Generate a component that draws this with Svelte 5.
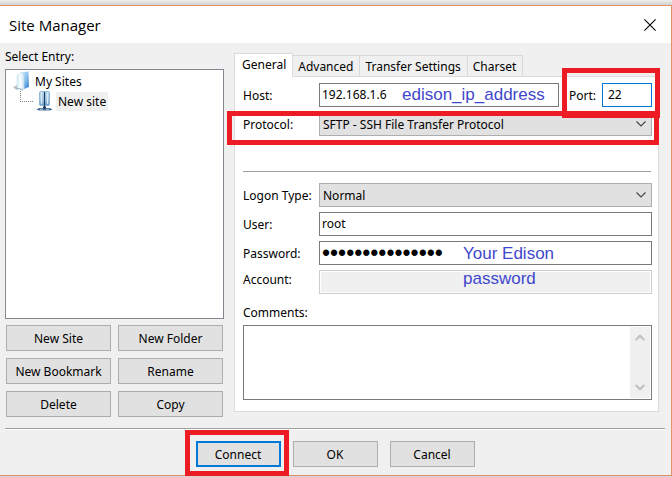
<script lang="ts">
  type Field = { host: string; port: string; user: string; password: string; account: string; comments: string };

  const tabs = ["General", "Advanced", "Transfer Settings", "Charset"];
  const siteActions = ["New Site", "New Folder", "New Bookmark", "Rename", "Delete", "Copy"];

  let activeTab = $state("General");
  let protocol = $state("SFTP - SSH File Transfer Protocol");
  let logonType = $state("Normal");
  let site = $state<Field>({
    host: "192.168.1.6",
    port: "22",
    user: "root",
    password: "edisonpassword1",
    account: "",
    comments: "",
  });
</script>

{#snippet chevron()}
  <svg class="chevron" viewBox="0 0 10 6" aria-hidden="true">
    <path d="M0.5 0.5 5 5 9.5 0.5" fill="none" stroke="#444" stroke-width="1.1" />
  </svg>
{/snippet}

<div class="dialog" role="dialog" aria-labelledby="title">
  <header>
    <h1 id="title">Site Manager</h1>
    <button class="close" type="button" aria-label="Close">
      <svg viewBox="0 0 12 12" aria-hidden="true">
        <path d="M0.4 0.4 11.6 11.6M11.6 0.4 0.4 11.6" stroke="#000" stroke-width="1.1" />
      </svg>
    </button>
  </header>

  <main>
    <section class="sites">
      <span id="entries">Select Entry:</span>
      <ul class="tree" role="tree" aria-labelledby="entries">
        <li role="treeitem" aria-selected="false">
          <div class="node">
            <svg class="folder" viewBox="0 0 19 20" aria-hidden="true">
              <defs>
                <linearGradient id="flap" x1="0" x2="1" y1="0" y2="1">
                  <stop offset="0" stop-color="#d9effb" />
                  <stop offset="0.5" stop-color="#8fc3ee" />
                  <stop offset="1" stop-color="#2f7fd0" />
                </linearGradient>
                <linearGradient id="front" x1="0" x2="1">
                  <stop offset="0" stop-color="#d3e9f6" />
                  <stop offset="0.5" stop-color="#fbfeff" />
                  <stop offset="1" stop-color="#c6e1f4" />
                </linearGradient>
              </defs>
              <path d="M0 16 4 14 5 19 2 18z" fill="#a9b4bc" opacity="0.8" />
              <path d="M7 1.5 15.5 0.5 16 16 11 18z" fill="url(#flap)" />
              <path d="M4 4 9 2 11 4 11 18.5 4 17z" fill="url(#front)" stroke="#c0dcec" stroke-width="0.5" />
              <path d="M3 17 10 18.8" stroke="#9db4c4" stroke-width="1" />
            </svg>
            <span>My Sites</span>
          </div>
          <ul role="group">
            <li role="treeitem" aria-selected="true">
              <div class="node child">
                <svg class="server" viewBox="0 0 17 20" aria-hidden="true">
                  <defs>
                    <linearGradient id="rack" x1="0" x2="0" y1="0" y2="1">
                      <stop offset="0" stop-color="#bdd8ec" />
                      <stop offset="0.6" stop-color="#a9cce6" />
                      <stop offset="1" stop-color="#6f9fc8" />
                    </linearGradient>
                  </defs>
                  <path d="M0.5 18.5 3 17H14L16.5 18.5 14 19.5H3z" fill="#4a6f92" />
                  <path d="M4 18.3H7M10 18.3H13" stroke="#a9cbe0" />
                  <rect x="3.5" y="0.5" width="10" height="14" rx="1" fill="url(#rack)" stroke="#93b7d2" />
                  <path d="M5.5 1V13M11.5 1V13" stroke="#d6eaf6" />
                  <path d="M8.5 1V18" stroke="#173f66" stroke-width="1.2" />
                  <path d="M7 16.5H10" stroke="#173f66" stroke-width="2" />
                </svg>
                <span class="selected">New site</span>
              </div>
            </li>
          </ul>
        </li>
      </ul>
      <div class="site-actions">
        {#each siteActions as action}
          <button class="push" type="button">{action}</button>
        {/each}
      </div>
    </section>

    <section class="settings">
      <div class="tabs" role="tablist">
        {#each tabs as tab}
          <button
            type="button"
            role="tab"
            class={["tab", activeTab === tab && "active"]}
            aria-selected={activeTab === tab}
            onclick={() => (activeTab = tab)}>{tab}</button
          >
        {/each}
      </div>

      <div class="panel" role="tabpanel">
        <div class="form">
          <label for="host">Host:</label>
          <div class="host-row">
            <div class="noted">
              <input id="host" bind:value={site.host} />
              <span class="note note-host">edison_ip_address</span>
            </div>
            <div class="port">
              <label for="port">Port:</label>
              <input id="port" class="focused" bind:value={site.port} />
              <span class="mark mark-port"></span>
            </div>
          </div>

          <label for="protocol">Protocol:</label>
          <div class="select">
            <select id="protocol" bind:value={protocol}>
              <option>SFTP - SSH File Transfer Protocol</option>
              <option>FTP - File Transfer Protocol</option>
            </select>
            {@render chevron()}
            <span class="mark mark-protocol"></span>
          </div>
        </div>

        <hr />

        <div class="form">
          <label for="logon">Logon Type:</label>
          <div class="select">
            <select id="logon" bind:value={logonType}>
              <option>Normal</option>
              <option>Anonymous</option>
            </select>
            {@render chevron()}
          </div>

          <label for="user">User:</label>
          <input id="user" bind:value={site.user} />

          <label for="password">Password:</label>
          <div class="noted">
            <input id="password" type="password" bind:value={site.password} />
            <span class="note note-password">Your Edison<br />password</span>
          </div>

          <label class="raised" for="account">Account:</label>
          <input id="account" disabled bind:value={site.account} />
        </div>

        <label class="comments-label" for="comments">Comments:</label>
        <div class="comments">
          <textarea id="comments" bind:value={site.comments}></textarea>
          <div class="scrollbar" aria-hidden="true">
            <svg viewBox="0 0 10 7"><path d="M0.7 6 5 1.7 9.3 6" fill="none" stroke="#bfbfbf" stroke-width="2" /></svg>
            <svg viewBox="0 0 10 7"><path d="M0.7 1 5 5.3 9.3 1" fill="none" stroke="#bfbfbf" stroke-width="2" /></svg>
          </div>
        </div>
      </div>
    </section>
  </main>

  <footer>
    <div class="marked">
      <button class="push default" type="button">Connect</button>
      <span class="mark mark-connect"></span>
    </div>
    <button class="push" type="button">OK</button>
    <button class="push" type="button">Cancel</button>
  </footer>
</div>

<style>
  :global(body) {
    margin: 0;
    padding: 5px 0 1px;
    background: linear-gradient(#efefef, #d2d2d2 5px);
  }

  .dialog,
  .dialog * {
    box-sizing: border-box;
  }

  .dialog {
    border: 1px solid #e19468;
    border-left: 0;
    background: #f0f0f0;
    color: #000;
    font: 12px/16px Tahoma, "Noto Sans", sans-serif;
  }

  button,
  input,
  select,
  textarea {
    font: inherit;
    color: inherit;
    border-radius: 0;
    outline: none;
  }

  header {
    display: flex;
    align-items: center;
    justify-content: space-between;
    height: 37px;
    padding: 0 15px 0 9px;
    background: #fff;
  }

  h1 {
    margin: 0;
    font: 15px/20px "Segoe UI", "Open Sans", "Noto Sans", sans-serif;
  }

  .close {
    display: flex;
    padding: 0;
    border: 0;
    background: none;
  }

  .close svg {
    width: 12px;
    height: 12px;
  }

  main {
    display: grid;
    grid-template-columns: 219px 1fr;
    gap: 10px;
    padding: 6px 12px 11px 5px;
  }

  .tree {
    height: 250px;
    margin: 4px 0 6px;
    padding: 1px 7px;
    border: 1px solid #828790;
    background: #fff;
  }

  ul {
    margin: 0;
    padding: 0;
    list-style: none;
  }

  .node {
    display: flex;
    align-items: center;
    gap: 3px;
    height: 20px;
  }

  .node span {
    padding-top: 2px;
  }

  .child {
    margin-left: 7px;
  }

  .child::before {
    content: "";
    align-self: flex-start;
    width: 12px;
    height: 10px;
    border: dotted #808080;
    border-width: 0 0 1px 1px;
  }

  .folder {
    width: 19px;
    height: 20px;
  }

  .server {
    width: 17px;
    height: 20px;
  }

  .node .selected {
    padding: 2px 2px 1px;
    background: #f0f0f0;
  }

  .site-actions {
    display: grid;
    grid-template-columns: 1fr 1fr;
    gap: 7px;
    padding: 0 1px;
  }

  .push {
    height: 26px;
    padding: 2px 0 0;
    border: 1px solid #adadad;
    background: #e1e1e1;
  }

  .default {
    border: 2px solid #0078d7;
  }

  .tabs {
    display: flex;
    align-items: flex-end;
    padding-top: 4px;
  }

  .tab {
    height: 21px;
    padding: 1px 6px 0 5px;
    border: 1px solid #d9d9d9;
    border-width: 1px 1px 0 0;
    background: #f0f0f0;
  }

  .tab.active {
    position: relative;
    height: 24px;
    margin-bottom: -1px;
    padding: 0 6px 2px 7px;
    border-left-width: 1px;
    background: #fff;
  }

  .panel {
    padding: 6px 6px 11px 8px;
    border: 1px solid #dcdcdc;
    background: #fff;
  }

  .form {
    display: grid;
    grid-template-columns: 76px 1fr;
    align-items: center;
    gap: 5px 0;
  }

  label {
    padding-top: 2px;
  }

  .raised {
    align-self: start;
  }

  input {
    display: block;
    width: 100%;
    height: 24px;
    padding: 0 2px 2px;
    border: 1px solid #7a7a7a;
    background: #fff;
  }

  input:disabled {
    border-color: #ccc;
    background: #f0f0f0;
    box-shadow: inset 0 0 0 1px #fff;
  }

  input[type="password"] {
    padding-bottom: 0;
    font: 23px/22px "Liberation Sans", sans-serif;
  }

  .focused {
    width: 50px;
    padding: 0 5px 2px;
    border-color: #0078d7;
  }

  .host-row {
    display: flex;
    gap: 10px;
  }

  .noted,
  .select,
  .port,
  .marked {
    position: relative;
  }

  .host-row .noted {
    flex: 1;
  }

  .port {
    display: flex;
    align-items: center;
    justify-content: space-between;
    width: 83px;
  }

  select {
    display: block;
    width: 100%;
    height: 24px;
    padding: 1px 3px 0;
    border: 1px solid #adadad;
    background: #e1e1e1;
    appearance: none;
  }

  .chevron {
    position: absolute;
    top: 9px;
    right: 6px;
    width: 10px;
    height: 6px;
    pointer-events: none;
  }

  hr {
    height: 1px;
    margin: 35px 1px 11px 0;
    border: 0;
    background: #a0a0a0;
  }

  .comments-label {
    display: block;
    margin: 9px 0 4px;
  }

  .comments {
    display: flex;
    height: 75px;
    padding: 1px;
    border: 1px solid #7a7a7a;
  }

  textarea {
    flex: 1;
    border: 0;
    resize: none;
  }

  .scrollbar {
    display: flex;
    flex-direction: column;
    align-items: center;
    justify-content: space-between;
    width: 20px;
    padding: 7px 0;
    background: #f0f0f0;
  }

  .scrollbar svg {
    width: 10px;
    height: 7px;
  }

  footer {
    display: flex;
    justify-content: center;
    gap: 12px;
    margin: 0 6px 0 5px;
    padding: 12px 0 8px;
    border-top: 1px solid #a0a0a0;
    box-shadow: inset 0 1px #fff;
  }

  footer .push {
    width: 85px;
  }

  /* hints laid over the form */
  .note {
    position: absolute;
    color: #3f48cc;
    font: 17px/25px "Liberation Sans", Arial, sans-serif;
    white-space: nowrap;
    pointer-events: none;
  }

  .note-host {
    top: -1px;
    left: 83px;
  }

  .note-password {
    top: 0;
    left: 144px;
  }

  .mark {
    position: absolute;
    z-index: 1;
    border: 5px solid #ed1c24;
    pointer-events: none;
  }

  .mark-port {
    inset: -15px -8px -11px -7px;
  }

  .mark-protocol {
    inset: -1px -7px -9px -92px;
  }

  .mark-connect {
    inset: -11px -8px -9px -11px;
  }
</style>
